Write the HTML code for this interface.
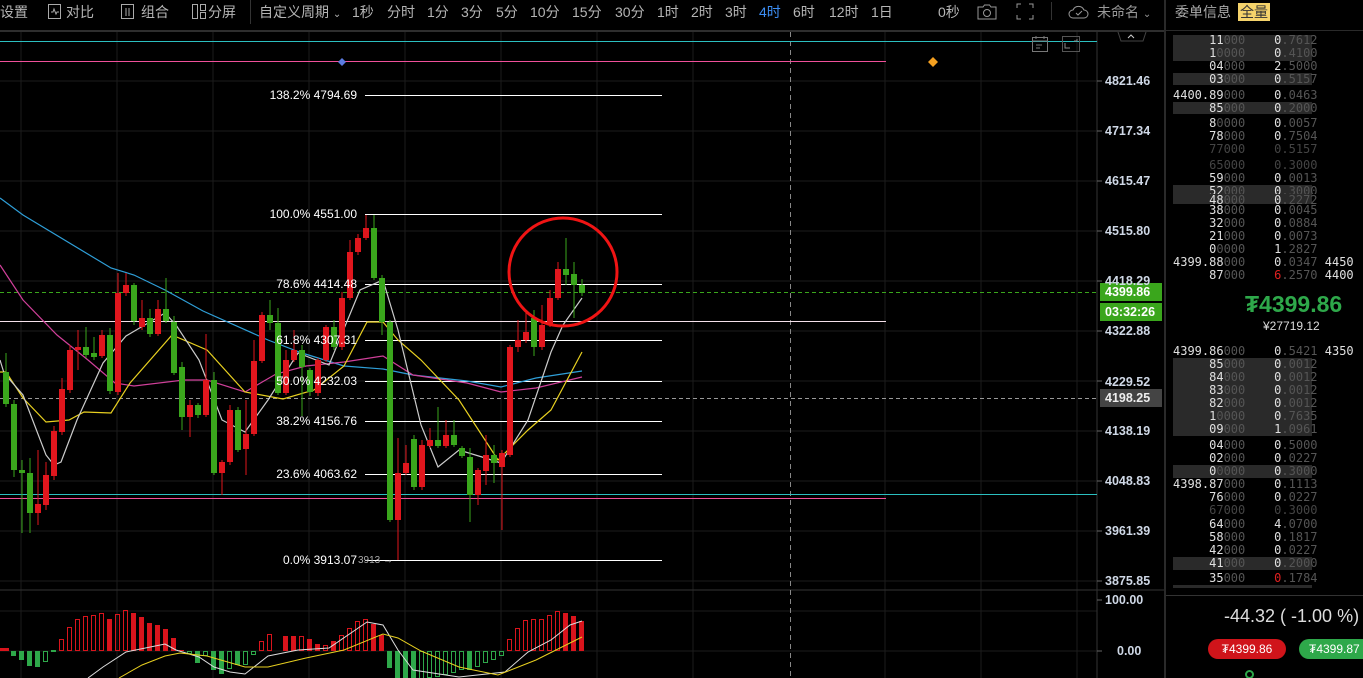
<!DOCTYPE html>
<html><head><meta charset="utf-8">
<style>
*{margin:0;padding:0;box-sizing:border-box}
html,body{width:1363px;height:678px;overflow:hidden}
body{background:#000;position:relative;font-family:"Liberation Sans","Noto Sans CJK SC",sans-serif;color:#b5b5b5}
.t{position:absolute;font-size:14px;white-space:nowrap;line-height:16px}
.ob{position:absolute;font-family:"DejaVu Sans Mono","Liberation Mono",monospace;font-size:12px;line-height:13px;white-space:normal;color:#e0e0e0}
.ob div{white-space:pre;overflow:hidden}
.d{color:#555}
.ax{position:absolute;font-size:12.5px;color:#cfd8e6;font-weight:bold;left:1105px;line-height:14px}
</style></head><body>

<div class="t" style="left:0;top:4px">设置</div>
<svg style="position:absolute;left:47px;top:3px" width="16" height="17"><rect x="1.5" y="1.5" width="12" height="14" fill="none" stroke="#aaa"/><path d="M4 9h2l1-3 2 5 1-2h2" fill="none" stroke="#aaa"/></svg>
<div class="t" style="left:66px;top:4px">对比</div>
<svg style="position:absolute;left:120px;top:3px" width="16" height="17"><rect x="1.5" y="1.5" width="12" height="14" fill="none" stroke="#aaa"/><path d="M6 5v8M9 5v8" stroke="#aaa"/></svg>
<div class="t" style="left:141px;top:4px">组合</div>
<svg style="position:absolute;left:191px;top:3px" width="16" height="17"><rect x="1.5" y="1.5" width="5" height="14" fill="none" stroke="#aaa"/><rect x="9.5" y="1.5" width="5" height="6" fill="none" stroke="#aaa"/><rect x="9.5" y="9.5" width="5" height="6" fill="none" stroke="#aaa"/></svg>
<div class="t" style="left:208px;top:4px">分屏</div>
<div style="position:absolute;left:250px;top:0;width:1px;height:24px;background:#333"></div>
<div class="t" style="left:259px;top:4px">自定义周期 <span style="font-size:10px">⌄</span></div>
<div class="t" style="left:352px;top:4px">1秒</div>
<div class="t" style="left:387px;top:4px">分时</div>
<div class="t" style="left:427px;top:4px">1分</div>
<div class="t" style="left:461px;top:4px">3分</div>
<div class="t" style="left:496px;top:4px">5分</div>
<div class="t" style="left:530px;top:4px">10分</div>
<div class="t" style="left:572px;top:4px">15分</div>
<div class="t" style="left:615px;top:4px">30分</div>
<div class="t" style="left:657px;top:4px">1时</div>
<div class="t" style="left:691px;top:4px">2时</div>
<div class="t" style="left:725px;top:4px">3时</div>
<div class="t" style="left:759px;top:4px;color:#3d8ff5">4时</div>
<div class="t" style="left:793px;top:4px">6时</div>
<div class="t" style="left:829px;top:4px">12时</div>
<div class="t" style="left:871px;top:4px">1日</div>
<div class="t" style="left:938px;top:4px">0秒</div>
<svg style="position:absolute;left:976px;top:3px" width="22" height="17"><path d="M2 4h5l1.5-2h5l1.5 2h5v12h-18z" fill="none" stroke="#999"/><circle cx="11" cy="10" r="3.5" fill="none" stroke="#999"/></svg>
<svg style="position:absolute;left:1016px;top:3px" width="18" height="17"><path d="M1 5V1h4M13 1h4v4M17 12v4h-4M5 16H1v-4" fill="none" stroke="#999"/></svg>
<div style="position:absolute;left:1051px;top:2px;width:1px;height:18px;background:#333"></div>
<svg style="position:absolute;left:1068px;top:3px" width="22" height="17"><path d="M5 15a4 4 0 0 1 0-8a6 6 0 0 1 11 0a4 4 0 0 1 0 8z" fill="none" stroke="#999"/><path d="M8 10l2 2 4-4" fill="none" stroke="#999"/></svg>
<div class="t" style="left:1097px;top:4px;color:#999">未命名 <span style="font-size:10px">⌄</span></div>
<div style="position:absolute;left:0;top:30px;width:1164px;height:2px;background:#2e2e2e"></div>

<div style="position:absolute;left:1164px;top:0;width:2px;height:678px;background:#2a2a2a"></div>
<div style="position:absolute;left:1166px;top:30px;width:197px;height:1px;background:#2a2a2a"></div>
<div class="t" style="left:1175px;top:4px;color:#aaa">委单信息</div>
<div class="t" style="left:1238px;top:3px;background:#f5d36b;color:#333;padding:0 2px;height:18px;line-height:18px">全量</div>

<svg style="position:absolute;left:0;top:0" width="1164" height="678">
<g stroke="#1c1c1c" stroke-width="1">
<path d="M21 32V678M117 32V678M213 32V678M309 32V678M405 32V678M501 32V678M597 32V678M693 32V678M885 32V678M981 32V678M1077 32V678"/>
<path d="M0 81H1097M0 131H1097M0 181H1097M0 231H1097M0 281H1097M0 331H1097M0 381H1097M0 431H1097M0 481H1097M0 531H1097M0 581H1097M0 611H1097M0 651H1097"/>
</g>
<path d="M1097 32V678" stroke="#333"/>
<path d="M0 590H1164" stroke="#333"/>
<path d="M790.5 32V678" stroke="#888" stroke-dasharray="5,4"/>
<g stroke="#666"><path d="M1097 81h5M1097 131h5M1097 181h5M1097 231h5M1097 281h5M1097 331h5M1097 381h5M1097 431h5M1097 481h5M1097 531h5M1097 581h5M1097 600h5M1097 651h5"/></g>
<path d="M0 41.5H1097" stroke="#2bbfc0"/>
<path d="M0 61.5H886" stroke="#f0509a"/>
<path d="M0 321.5H886" stroke="#f4e0ea"/>
<path d="M0 494.5H1097" stroke="#2bbfc0"/>
<path d="M0 498.5H886" stroke="#f0509a"/>
<path d="M0 292.5H1097" stroke="#3aa61c" stroke-dasharray="4,3"/>
<path d="M0 398.5H1097" stroke="#999" stroke-dasharray="4,3"/>
<g stroke="#fff"><path d="M365 95.5H662M365 214.5H662M365 284.5H662M365 340.5H662M365 381.5H662M365 421.5H662M365 474.5H662M365 560.5H662"/></g>
<path d="M342 58l4 4-4 4-4-4z" fill="#5b7be0"/>
<path d="M933 57l5 5-5 5-5-5z" fill="#f5a020"/>
<rect x="1032.5" y="37.5" width="15" height="14" fill="none" stroke="#777"/><path d="M1032 41h16M1036 45h6M1036 48h4M1036 36v3M1044 36v3" stroke="#777"/>
<rect x="1062.5" y="36.5" width="17" height="15" fill="none" stroke="#555"/><path d="M1065 43v5h5M1077 39v2h-3" fill="none" stroke="#888"/>
<path d="M1118 32l3 9h22l3-9" fill="none" stroke="#444"/><path d="M1128 38l3-3 3 3" fill="none" stroke="#ccc"/>
<g fill="none" stroke-width="1.2">
<polyline stroke="#2f9fd8" points="0,198 23,215 111,268 134,275 165,290 203,311 268,340 302,353 344,366 383,369 413,375 467,381 501,387 536,378 582,371"/>
<polyline stroke="#d0409a" points="0,265 23,300 57,335 88,360 115,383 134,386 184,380 207,380 245,392 276,374 306,366 344,362 383,356 413,375 467,383 501,392 536,388 582,377"/>
<polyline stroke="#e8d020" points="0,372 6,372 23,398 46,422 69,420 84,412 111,413 130,383 172,335 207,350 245,392 283,399 314,390 344,366 367,322 383,322 398,340 421,360 459,400 498,460 528,430 551,410 582,352"/>
<polyline stroke="#ccc" points="0,360 4,373 23,395 46,455 54,465 61,462 77,420 103,363 126,336 165,313 176,325 199,360 222,420 245,432 268,400 298,353 329,365 360,290 383,280 398,330 421,425 438,467 459,450 482,457 501,463 528,420 551,352 563,325 582,298"/>
</g>
<g stroke="#e0161d" fill="none"><path d="M38 450V525M46 462V510M54 426V480M62 378V435M70 345V393M78 330V370M102 330V358M118 273V395M126 273V296M142 300V330M158 300V336M190 400V437M206 334V417M222 460V495M230 405V465M246 400V475M254 340V436M262 312V363M286 350V395M294 330V362M318 358V396M326 325V362M342 292V350M350 240V300M358 234V255M366 215V240M398 438V560M406 445V475M422 440V490M430 428V448M446 420V448M478 468V505M486 435V485M502 450V530M510 345V457M518 320V352M526 312V343M542 305V350M550 290V327M558 262V300"/></g>
<g fill="#e0161d">
<rect x="35" y="504" width="6" height="9"/><rect x="43" y="475" width="6" height="30"/><rect x="51" y="431" width="6" height="45"/><rect x="59" y="389" width="6" height="43"/><rect x="67" y="350" width="6" height="40"/><rect x="75" y="347" width="6" height="3"/><rect x="99" y="335" width="6" height="21"/><rect x="115" y="293" width="6" height="99"/><rect x="123" y="285" width="6" height="8"/><rect x="139" y="318" width="6" height="9"/><rect x="155" y="309" width="6" height="25"/><rect x="187" y="405" width="6" height="12"/><rect x="203" y="380" width="6" height="35"/><rect x="219" y="462" width="6" height="11"/><rect x="227" y="410" width="6" height="52"/><rect x="243" y="434" width="6" height="15"/><rect x="251" y="361" width="6" height="73"/><rect x="259" y="315" width="6" height="46"/><rect x="283" y="360" width="6" height="33"/><rect x="291" y="350" width="6" height="10"/><rect x="315" y="360" width="6" height="33"/><rect x="323" y="327" width="6" height="33"/><rect x="339" y="298" width="6" height="49"/><rect x="347" y="252" width="6" height="46"/><rect x="355" y="238" width="6" height="14"/><rect x="363" y="228" width="6" height="10"/><rect x="395" y="473" width="6" height="47"/><rect x="403" y="463" width="6" height="10"/><rect x="419" y="445" width="6" height="42"/><rect x="427" y="440" width="6" height="6"/><rect x="443" y="435" width="6" height="11"/><rect x="475" y="470" width="6" height="25"/><rect x="483" y="455" width="6" height="16"/><rect x="499" y="453" width="6" height="14"/><rect x="507" y="347" width="6" height="108"/><rect x="515" y="340" width="6" height="7"/><rect x="523" y="332" width="6" height="8"/><rect x="539" y="325" width="6" height="22"/><rect x="547" y="298" width="6" height="27"/><rect x="555" y="269" width="6" height="29"/>
</g>
<g stroke="#3aa61c" fill="none"><path d="M6 353V407M14 400V477M22 460V533M30 458V533M86 327V358M94 337V360M110 328V394M134 283V325M150 309V337M166 278V323M174 316V375M182 362V430M198 403V418M214 372V475M238 407V452M270 300V330M278 308V395M302 345V416M310 368V396M334 320V350M374 215V280M382 275V335M390 320V522M414 435V490M438 407V448M454 420V447M462 446V458M470 448V522M494 445V483M534 310V356M566 238V285M574 262V318M582 279V296"/></g>
<g fill="#3aa61c">
<rect x="3" y="372" width="6" height="32"/><rect x="11" y="404" width="6" height="66"/><rect x="19" y="470" width="6" height="3"/><rect x="27" y="473" width="6" height="40"/><rect x="83" y="347" width="6" height="8"/><rect x="91" y="353" width="6" height="4"/><rect x="107" y="335" width="6" height="56"/><rect x="131" y="285" width="6" height="36"/><rect x="147" y="318" width="6" height="16"/><rect x="163" y="309" width="6" height="12"/><rect x="171" y="322" width="6" height="51"/><rect x="179" y="367" width="6" height="50"/><rect x="195" y="405" width="6" height="10"/><rect x="211" y="380" width="6" height="93"/><rect x="235" y="410" width="6" height="40"/><rect x="267" y="315" width="6" height="8"/><rect x="275" y="323" width="6" height="70"/><rect x="299" y="350" width="6" height="17"/><rect x="307" y="370" width="6" height="22"/><rect x="331" y="327" width="6" height="20"/><rect x="371" y="228" width="6" height="50"/><rect x="379" y="278" width="6" height="44"/><rect x="387" y="322" width="6" height="198"/><rect x="411" y="439" width="6" height="48"/><rect x="435" y="440" width="6" height="6"/><rect x="451" y="435" width="6" height="10"/><rect x="459" y="448" width="6" height="8"/><rect x="467" y="457" width="6" height="38"/><rect x="491" y="455" width="6" height="8"/><rect x="531" y="318" width="6" height="29"/><rect x="563" y="269" width="6" height="6"/><rect x="571" y="274" width="6" height="11"/><rect x="579" y="285" width="6" height="8"/>
</g>
<g fill="#fff" font-size="12" font-family="Liberation Sans,sans-serif" text-anchor="end">
<text x="357" y="99">138.2% 4794.69</text>
<text x="357" y="218">100.0% 4551.00</text>
<text x="357" y="288">78.6% 4414.48</text>
<text x="357" y="344">61.8% 4307.31</text>
<text x="357" y="385">50.0% 4232.03</text>
<text x="357" y="425">38.2% 4156.76</text>
<text x="357" y="478">23.6% 4063.62</text>
<text x="357" y="564">0.0% 3913.07</text>
</g>
<text x="358" y="563" fill="#aaa" font-size="10" font-family="Liberation Sans,sans-serif">3913 →</text>
<circle cx="563" cy="272" r="54" fill="none" stroke="#f01414" stroke-width="3"/>
<g fill="#d9141c">
<rect x="0" y="648" width="4" height="3"/><rect x="4" y="648" width="5" height="3"/><rect x="107" y="619" width="5" height="32"/><rect x="131" y="613" width="5" height="38"/><rect x="139" y="617" width="5" height="34"/><rect x="147" y="623" width="5" height="28"/><rect x="155" y="625" width="5" height="26"/><rect x="163" y="629" width="5" height="22"/><rect x="171" y="638" width="5" height="13"/><rect x="179" y="650" width="5" height="1"/><rect x="283" y="636" width="5" height="15"/><rect x="291" y="636" width="5" height="15"/><rect x="307" y="639" width="5" height="12"/><rect x="315" y="644" width="5" height="7"/><rect x="331" y="641" width="5" height="10"/><rect x="371" y="624" width="5" height="27"/><rect x="379" y="635" width="5" height="16"/><rect x="563" y="613" width="5" height="38"/><rect x="571" y="616" width="5" height="35"/><rect x="579" y="621" width="5" height="30"/>
</g>
<g fill="none" stroke="#d9141c">
<rect x="59.5" y="639.5" width="4" height="11"/><rect x="67.5" y="627.5" width="4" height="23"/><rect x="75.5" y="619.5" width="4" height="31"/><rect x="83.5" y="616.5" width="4" height="34"/><rect x="91.5" y="615.5" width="4" height="35"/><rect x="99.5" y="613.5" width="4" height="37"/><rect x="115.5" y="614.5" width="4" height="36"/><rect x="123.5" y="610.5" width="4" height="40"/><rect x="259.5" y="641.5" width="4" height="9"/><rect x="267.5" y="634.5" width="4" height="16"/><rect x="299.5" y="636.5" width="4" height="14"/><rect x="323.5" y="645.5" width="4" height="5"/><rect x="339.5" y="635.5" width="4" height="15"/><rect x="347.5" y="628.5" width="4" height="22"/><rect x="355.5" y="621.5" width="4" height="29"/><rect x="363.5" y="619.5" width="4" height="31"/><rect x="507.5" y="639.5" width="4" height="11"/><rect x="515.5" y="628.5" width="4" height="22"/><rect x="523.5" y="620.5" width="4" height="30"/><rect x="531.5" y="619.5" width="4" height="31"/><rect x="539.5" y="619.5" width="4" height="31"/><rect x="547.5" y="615.5" width="4" height="35"/><rect x="555.5" y="611.5" width="4" height="39"/>
</g>
<g fill="#2ea84a">
<rect x="11" y="651" width="5" height="5"/><rect x="19" y="651" width="5" height="9"/><rect x="27" y="651" width="5" height="15"/><rect x="35" y="651" width="5" height="16"/><rect x="51" y="650" width="5" height="2"/><rect x="195" y="651" width="5" height="12"/><rect x="211" y="651" width="5" height="19"/><rect x="219" y="651" width="5" height="23"/><rect x="235" y="651" width="5" height="14"/><rect x="387" y="651" width="5" height="17"/><rect x="395" y="651" width="5" height="27"/><rect x="403" y="651" width="5" height="27"/><rect x="411" y="651" width="5" height="27"/><rect x="467" y="651" width="5" height="19"/>
</g>
<g fill="none" stroke="#2ea84a">
<rect x="43.5" y="651.5" width="4" height="10"/><rect x="187.5" y="651.5" width="4" height="2"/><rect x="203.5" y="651.5" width="4" height="4"/><rect x="227.5" y="651.5" width="4" height="17"/><rect x="243.5" y="651.5" width="4" height="13"/><rect x="251.5" y="651.5" width="4" height="3"/><rect x="419.5" y="651.5" width="4" height="27"/><rect x="427.5" y="651.5" width="4" height="26"/><rect x="435.5" y="651.5" width="4" height="25"/><rect x="443.5" y="651.5" width="4" height="23"/><rect x="451.5" y="651.5" width="4" height="21"/><rect x="459.5" y="651.5" width="4" height="18"/><rect x="475.5" y="651.5" width="4" height="15"/><rect x="483.5" y="651.5" width="4" height="11"/><rect x="491.5" y="651.5" width="4" height="8"/><rect x="499.5" y="651.5" width="4" height="4"/>
</g>
<polyline fill="none" stroke="#ddd" points="88,678 103,667 126,652 165,644 176,650 199,657 214,667 230,672 245,674 268,656 298,650 329,648 367,622 383,625 398,650 413,670 459,677 505,672 528,652 551,640 570,625 582,621"/>
<polyline fill="none" stroke="#e8d020" points="119,678 142,665 165,656 180,653 207,656 245,667 268,667 306,658 344,650 383,634 398,638 421,651 459,667 498,675 536,660 582,637"/>
<rect x="1100" y="283" width="62" height="18" fill="#3aa61c"/>
<rect x="1100" y="303" width="62" height="18" fill="#3aa61c"/>
<rect x="1100" y="389" width="62" height="18" fill="#444"/>
</svg>

<div class="ax" style="top:74px">4821.46</div>
<div class="ax" style="top:124px">4717.34</div>
<div class="ax" style="top:174px">4615.47</div>
<div class="ax" style="top:224px">4515.80</div>
<div class="ax" style="top:274px">4418.29</div>
<div class="ax" style="top:285px;color:#fff">4399.86</div>
<div class="ax" style="top:305px;color:#fff">03:32:26</div>
<div class="ax" style="top:324px">4322.88</div>
<div class="ax" style="top:375px">4229.52</div>
<div class="ax" style="top:391px;color:#eee">4198.25</div>
<div class="ax" style="top:424px">4138.19</div>
<div class="ax" style="top:474px">4048.83</div>
<div class="ax" style="top:524px">3961.39</div>
<div class="ax" style="top:574px">3875.85</div>
<div class="ax" style="top:593px">100.00</div>
<div class="ax" style="top:644px;left:1117px">0.00</div>

<div style="position:absolute;left:1173px;top:35px;width:139px;height:26px;background:#2a2a2a"></div>
<div style="position:absolute;left:1173px;top:73px;width:139px;height:12px;background:#2a2a2a"></div>
<div style="position:absolute;left:1173px;top:102px;width:139px;height:12px;background:#2a2a2a"></div>
<div style="position:absolute;left:1173px;top:185px;width:139px;height:19px;background:#2a2a2a"></div>
<div style="position:absolute;left:1173px;top:358px;width:139px;height:78px;background:#2a2a2a"></div>
<div style="position:absolute;left:1173px;top:465px;width:139px;height:13px;background:#2a2a2a"></div>
<div style="position:absolute;left:1173px;top:557px;width:139px;height:13px;background:#2a2a2a"></div>
<div style="position:absolute;left:1173px;top:585px;width:139px;height:3px;background:#2a2a2a"></div>
<div style="position:absolute;left:1166px;top:595px;width:197px;height:1px;background:#333"></div>

<div class="ob" style="left:1173px;top:34px;width:190px"><div style="height:13px">     11<span class="d">000</span>    0<span class="d">.7612</span></div><div style="height:13px">     1<span class="d">0000</span>    0<span class="d">.4100</span></div><div style="height:13px">     04<span class="d">000</span>    2<span class="d">.5000</span></div><div style="height:13px">     03<span class="d">000</span>    0<span class="d">.5157</span></div><div style="height:16px;padding-top:3px">4400.89<span class="d">000</span>    0<span class="d">.0463</span></div><div style="height:13px">     85<span class="d">000</span>    0<span class="d">.2000</span></div><div style="height:15px;padding-top:2px">     8<span class="d">0000</span>    0<span class="d">.0057</span></div><div style="height:13px">     78<span class="d">000</span>    0<span class="d">.7504</span></div><div style="height:16px;color:#444">     77000    0.5157</div><div style="height:13px;color:#444">     65000    0.3000</div><div style="height:13px">     59<span class="d">000</span>    0<span class="d">.0013</span></div><div style="height:9px">     52<span class="d">000</span>    0<span class="d">.3000</span></div><div style="height:10px">     48<span class="d">000</span>    0<span class="d">.2272</span></div><div style="height:13px">     38<span class="d">000</span>    0<span class="d">.0045</span></div><div style="height:13px">     32<span class="d">000</span>    0<span class="d">.0884</span></div><div style="height:13px">     21<span class="d">000</span>    0<span class="d">.0073</span></div><div style="height:13px">     0<span class="d">0000</span>    1<span class="d">.2827</span></div><div style="height:13px">4399.88<span class="d">000</span>    0<span class="d">.0347</span> 4450</div><div style="height:13px">     87<span class="d">000</span>    <span style="color:#e02020">6</span><span class="d">.2570</span> 4400</div></div>
<div style="position:absolute;left:1245px;top:290px;font-size:23px;color:#2ea84a;font-weight:bold;line-height:28px">₮4399.86</div>
<div style="position:absolute;left:1263px;top:319px;font-size:12px;color:#ddd;line-height:14px">¥27719.12</div>

<div class="ob" style="left:1173px;top:345px;width:190px"><div style="height:13px">4399.86<span class="d">000</span>    0<span class="d">.5421</span> 4350</div><div style="height:13px">     85<span class="d">000</span>    0<span class="d">.0012</span></div><div style="height:13px">     84<span class="d">000</span>    0<span class="d">.0012</span></div><div style="height:13px">     83<span class="d">000</span>    0<span class="d">.0012</span></div><div style="height:13px">     82<span class="d">000</span>    0<span class="d">.0012</span></div><div style="height:13px">     1<span class="d">0000</span>    0<span class="d">.7635</span></div><div style="height:13px">     09<span class="d">000</span>    1<span class="d">.0961</span></div><div style="height:16px;padding-top:3px">     04<span class="d">000</span>    0<span class="d">.5000</span></div><div style="height:13px">     02<span class="d">000</span>    0<span class="d">.0227</span></div><div style="height:13px">     0<span class="d">0000</span>    0<span class="d">.3000</span></div><div style="height:13px">4398.87<span class="d">000</span>    0<span class="d">.1113</span></div><div style="height:13px">     76<span class="d">000</span>    0<span class="d">.0227</span></div><div style="height:14px;color:#444">     67000    0.3000</div><div style="height:13px">     64<span class="d">000</span>    4<span class="d">.0700</span></div><div style="height:13px">     58<span class="d">000</span>    0<span class="d">.1817</span></div><div style="height:13px">     42<span class="d">000</span>    0<span class="d">.0227</span></div><div style="height:13px">     41<span class="d">000</span>    0<span class="d">.2000</span></div><div style="height:15px;padding-top:2px">     35<span class="d">000</span>    <span style="color:#e02020">0</span><span class="d">.1784</span></div></div>

<div style="position:absolute;left:1224px;top:605px;font-size:18px;color:#ddd;line-height:22px;white-space:nowrap">-44.32 ( -1.00 %)</div>
<div style="position:absolute;left:1208px;top:639px;width:78px;height:20px;border-radius:10px;background:#d0141a;color:#fff;font-size:12px;line-height:20px;text-align:center">₮4399.86</div>
<div style="position:absolute;left:1299px;top:639px;width:80px;height:20px;border-radius:10px;background:#2ea84a;color:#fff;font-size:12px;line-height:20px;padding-left:10px">₮4399.87</div>
<div style="position:absolute;left:1245px;top:670px;width:9px;height:9px;border-radius:50%;border:2.5px solid #2ea84a"></div>
</body></html>
